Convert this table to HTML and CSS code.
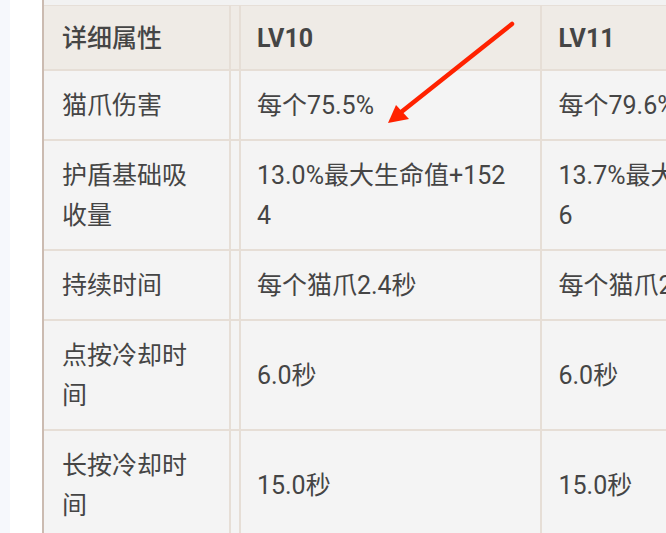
FILE: index.html
```html
<!DOCTYPE html>
<html lang="zh">
<head>
<meta charset="utf-8">
<link rel="stylesheet" href="styles.css">
</head>
<body>
<div class="page">
  <div class="strip"></div>
  <div class="gutter"></div>
  <div class="content">
    <table class="attr-table">
      <colgroup>
        <col class="c-name">
        <col class="c-gap">
        <col class="c-lv">
        <col class="c-lv">
      </colgroup>
      <thead>
        <tr><th>详细属性</th><th class="gap"></th><th class="lv">LV10</th><th class="lv">LV11</th></tr>
      </thead>
      <tbody>
        <tr><td>猫爪伤害</td><td class="gap"></td><td>每个75.5%</td><td>每个79.6%</td></tr>
        <tr><td>护盾基础吸<br>收量</td><td class="gap"></td><td>13.0%最大生命值+152<br>4</td><td>13.7%最大生命值+167<br>6</td></tr>
        <tr><td>持续时间</td><td class="gap"></td><td>每个猫爪2.4秒</td><td>每个猫爪2.5秒</td></tr>
        <tr><td>点按冷却时<br>间</td><td class="gap"></td><td>6.0秒</td><td>6.0秒</td></tr>
        <tr><td>长按冷却时<br>间</td><td class="gap"></td><td>15.0秒</td><td>15.0秒</td></tr>
      </tbody>
    </table>
  </div>
  <svg class="arrow" width="666" height="533" viewBox="0 0 666 533">
    <line x1="512" y1="24" x2="400" y2="113" stroke="#ff2200" stroke-width="4.5" stroke-linecap="round"/>
    <polygon points="388,123 396,105 409,119" fill="#ff2200"/>
  </svg>
</div>
</body>
</html>
```
FILE: styles.css
```css
html, body {
  margin: 0;
  padding: 0;
  width: 666px;
  height: 533px;
  overflow: hidden;
  background: #ffffff;
}
.page {
  display: flex;
  width: 666px;
  height: 533px;
  position: relative;
  overflow: hidden;
}
.strip {
  width: 10px;
  flex: none;
  background: #f6f8fc;
}
.gutter {
  width: 32px;
  flex: none;
  background: #ffffff;
}
.content {
  flex: none;
  border-left: 2px solid #cbbbb1;
  background: #f2f2f2;
  padding-top: 5px;
}
.attr-table {
  border-collapse: collapse;
  table-layout: fixed;
  width: 800px;
  font-family: Roboto, "Noto Sans CJK SC", sans-serif;
  font-size: 25px;
  color: #454545;
  border-top: 1px solid #e6dfd8;
}
.c-name { width: 183px; }
.c-gap { width: 10px; }
.c-lv { width: 297px; }
.attr-table th,
.attr-table td {
  border: 2px solid #e6ded6;
  border-top: none;
  text-align: left;
  vertical-align: middle;
  line-height: 40px;
  padding: 15px 16px 13px;
  white-space: nowrap;
}
.attr-table th {
  background: #efebe6;
  font-weight: 500;
  padding: 13px 16px 10px;
}
.attr-table th.lv {
  font-weight: 700;
}
.attr-table td {
  background: #f4f4f4;
}
.attr-table td:first-child,
.attr-table th:first-child {
  border-left: none;
  padding-left: 18px;
}
.attr-table .gap {
  padding: 0;
}
.arrow {
  position: absolute;
  left: 0;
  top: 0;
  pointer-events: none;
}
```
